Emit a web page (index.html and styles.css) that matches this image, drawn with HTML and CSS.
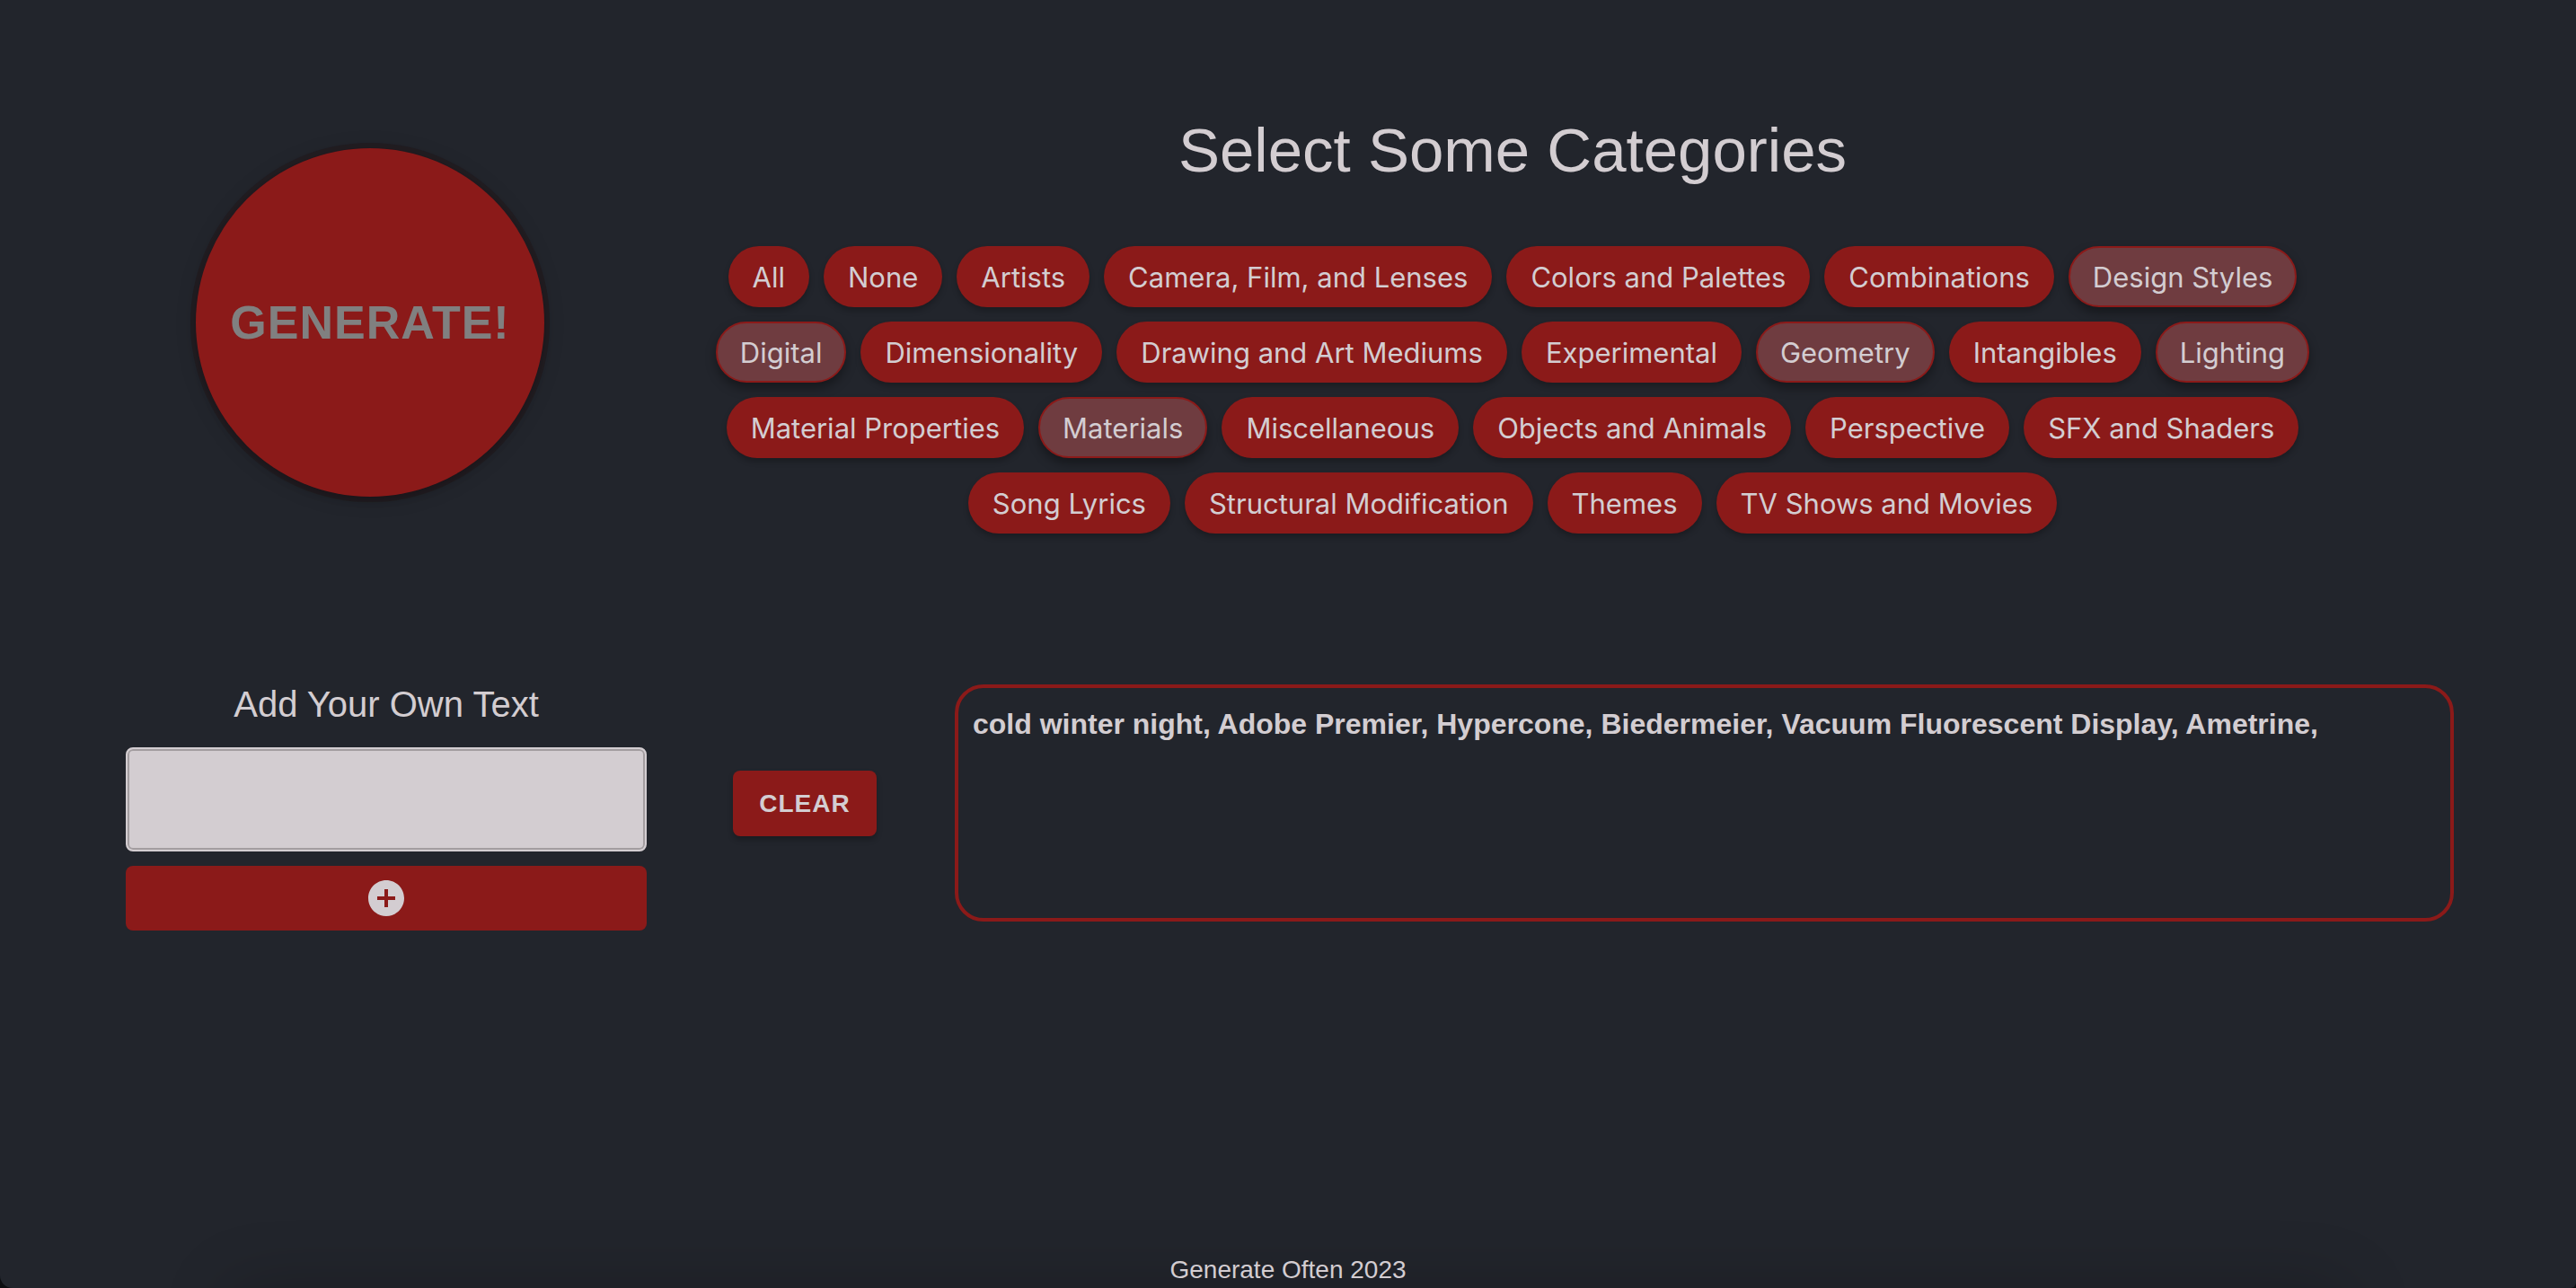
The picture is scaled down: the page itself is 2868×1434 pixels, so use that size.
FILE: index.html
```html
<!DOCTYPE html>
<html lang="en">
<head>
<meta charset="utf-8">
<meta name="viewport" content="width=device-width, initial-scale=1">
<title>Generate Often</title>
<link rel="stylesheet" href="styles.css">
</head>
<body>
<main class="page">
  <section class="top">
    <div class="generate-cell">
      <button class="generate" type="button">GENERATE!</button>
    </div>
    <div class="categories">
      <h1 class="title">Select Some Categories</h1>
      <div class="chips">
        <button class="chip" type="button">All</button>
        <button class="chip" type="button">None</button>
        <button class="chip" type="button">Artists</button>
        <button class="chip" type="button">Camera, Film, and Lenses</button>
        <button class="chip" type="button">Colors and Palettes</button>
        <button class="chip" type="button">Combinations</button>
        <button class="chip chip-on" type="button" aria-pressed="true">Design Styles</button>
        <button class="chip chip-on" type="button" aria-pressed="true">Digital</button>
        <button class="chip" type="button">Dimensionality</button>
        <button class="chip" type="button">Drawing and Art Mediums</button>
        <button class="chip" type="button">Experimental</button>
        <button class="chip chip-on" type="button" aria-pressed="true">Geometry</button>
        <button class="chip" type="button">Intangibles</button>
        <button class="chip chip-on" type="button" aria-pressed="true">Lighting</button>
        <button class="chip" type="button">Material Properties</button>
        <button class="chip chip-on" type="button" aria-pressed="true">Materials</button>
        <button class="chip" type="button">Miscellaneous</button>
        <button class="chip" type="button">Objects and Animals</button>
        <button class="chip" type="button">Perspective</button>
        <button class="chip" type="button">SFX and Shaders</button>
        <button class="chip" type="button">Song Lyrics</button>
        <button class="chip" type="button">Structural Modification</button>
        <button class="chip" type="button">Themes</button>
        <button class="chip" type="button">TV Shows and Movies</button>
      </div>
    </div>
  </section>
  <section class="bottom">
    <form class="own-text">
      <label class="own-label" for="own">Add Your Own Text</label>
      <input class="own-input" id="own" type="text">
      <button class="add" type="button" aria-label="Add text">
        <svg class="add-icon" viewBox="0 0 24 24" aria-hidden="true"><path d="M12 2C6.48 2 2 6.48 2 12s4.48 10 10 10 10-4.48 10-10S17.52 2 12 2zm5 11h-4v4h-2v-4H7v-2h4V7h2v4h4v2z"/></svg>
      </button>
    </form>
    <button class="clear" type="button">CLEAR</button>
    <output class="result">cold winter night, Adobe Premier, Hypercone, Biedermeier, Vacuum Fluorescent Display, Ametrine,</output>
  </section>
</main>
<footer class="footer">Generate Often 2023</footer>
</body>
</html>
```
FILE: styles.css
```css
* {
  box-sizing: border-box;
}

html {
  background: #0c0d10;
}

body {
  margin: 0;
  min-height: 100vh;
  display: flex;
  flex-direction: column;
  overflow: hidden;
  border-radius: 0 0 6px 14px;
  background: #22252c;
  color: #d3cdd1;
  font-family: "Liberation Sans", Arial, sans-serif;
}

button {
  border: 0;
  padding: 0;
  color: inherit;
  background: #8b1a19;
  font-family: inherit;
}

.page {
  flex: 1;
  padding: 128px 136px 0 140px;
}

.top {
  display: flex;
  gap: 64px;
  align-items: flex-start;
}

.generate-cell {
  width: 544px;
  padding-top: 37px;
  display: flex;
  justify-content: center;
}

.generate {
  width: 388px;
  height: 388px;
  border-radius: 50%;
  color: #808080;
  font-size: 52px;
  font-weight: 700;
  letter-spacing: 1px;
  box-shadow: 0 6px 10px -2px rgba(0, 0, 0, 0.2), 0 0 0 6px rgba(33, 26, 30, 0.8), 0 2px 24px rgba(0, 0, 0, 0.14);
}

.categories {
  flex: 1;
  padding-right: 112px;
}

.title {
  margin: 0 0 66px;
  text-align: center;
  font-size: 69px;
  line-height: 80px;
  font-weight: 400;
}

.chips {
  display: flex;
  flex-wrap: wrap;
  justify-content: center;
  gap: 16px;
}

.chip {
  height: 68px;
  padding: 0 27px;
  border-radius: 34px;
  font-family: Inter, sans-serif;
  font-size: 31px;
  box-shadow: 0 4px 6px rgba(0, 0, 0, 0.24);
}

.chip-on {
  padding: 0 25px;
  border: 2px solid #8b1a19;
  background: #6f3c40;
  box-shadow: 0 6px 12px rgba(0, 0, 0, 0.36);
}

.bottom {
  display: flex;
  align-items: flex-start;
  padding-top: 168px;
}

.own-text {
  width: 580px;
  display: flex;
  flex-direction: column;
  gap: 16px;
}

.own-label {
  padding-bottom: 10px;
  text-align: center;
  font-size: 40px;
  line-height: 44px;
}

.own-input {
  width: 100%;
  height: 116px;
  padding: 0 24px;
  border: 2px solid #d3cdd1;
  border-radius: 8px;
  outline: none;
  background: #d3cdd1;
  box-shadow: inset 0 0 0 2px #a39da0;
  font-size: 32px;
}

.add {
  height: 72px;
  border-radius: 8px;
  display: flex;
  align-items: center;
  justify-content: center;
}

.add-icon {
  width: 48px;
  height: 48px;
  fill: #d3cdd1;
}

.clear {
  width: 160px;
  height: 73px;
  margin: 96px 87px 0 96px;
  border-radius: 8px;
  font-size: 28px;
  font-weight: 700;
  letter-spacing: 1px;
  box-shadow: 0 4px 6px rgba(0, 0, 0, 0.24);
}

.result {
  flex: 1;
  height: 264px;
  padding: 20px 16px;
  border: 4px solid #8b1a19;
  border-radius: 32px;
  font-size: 32px;
  line-height: 40px;
  font-weight: 700;
}

.footer {
  position: relative;
  isolation: isolate;
  margin: 0 260px;
  text-align: center;
  font-size: 28px;
  line-height: 40px;
}

/* soft shade rising from the bottom edge of the window */
.footer::before {
  content: "";
  position: absolute;
  z-index: -1;
  bottom: 0;
  left: 60px;
  right: 60px;
  height: 0;
  box-shadow: 0 64px 80px 60px rgba(0, 0, 0, 0.24);
}
```
